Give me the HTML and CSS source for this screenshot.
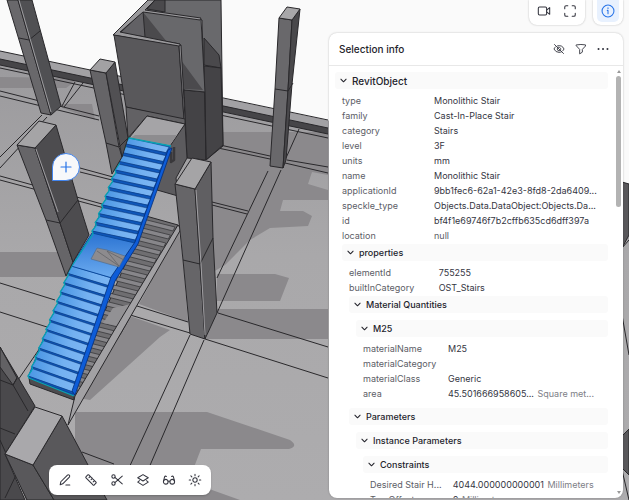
FILE: index.html
```html
<!DOCTYPE html>
<html lang="en">
<head>
<meta charset="utf-8">
<title>Model viewer</title>
<link rel="stylesheet" href="styles.css">
</head>
<body>
<main class="viewer">
  <svg class="scene" viewBox="0 0 629 500" preserveAspectRatio="xMinYMin slice" aria-hidden="true">
    <defs>
      <linearGradient id="floor" x1="0" y1="0" x2="0" y2="1"><stop offset="0" stop-color="#9b9a9d"/><stop offset=".45" stop-color="#a9a8aa"/><stop offset="1" stop-color="#adacae"/></linearGradient>
      <linearGradient id="tread" x1="0" y1="0" x2="1" y2="0"><stop offset="0" stop-color="#4a96e4"/><stop offset=".6" stop-color="#74b1f1"/><stop offset="1" stop-color="#7db6f3"/></linearGradient>
      <linearGradient id="landing" x1="0" y1="0" x2="0" y2="1"><stop offset="0" stop-color="#2b73d2"/><stop offset="1" stop-color="#6cacf0"/></linearGradient>
    </defs>
    <path fill="url(#floor)" d="M0 56 629 188V500H0Z"/>
    <!-- floor shadows -->
    <g fill="#8b898c">
      <path d="M0 77 80 78 66 88H0ZM60 104H92L95 120 62 108ZM222 132H328V175L312 172 308 184 328 190V200H283L280 211H303L312 216 308 226 270 228 250 240 225 265 213 272 206 150Z"/>
      <path d="M217 274H275L289 278 280 301H217ZM216 309H328V339H206ZM0 252H60L70 277H0ZM127 315 170 330 160 337 90 400 78 398ZM178 226 183 260 188 322 139 304 150 284ZM75 412H207L290 440Q299 446 289 449H201L191 475 212 490 240 500H75Z"/>
    </g>
    <!-- parapet -->
    <path fill="#a2a1a4" d="M0 51 629 184V197L0 60Z"/><path fill="#464548" d="M0 59 328 128V134L0 65Z"/>
    <g class="edge">
      <path d="M0 51 328 120M0 59 328 128M0 65 328 134M0 68 328 138"/>
      <path d="M0 91 99 116M0 96 99 120M62 106 75 82M64 107 83 83M42 115 0 157M47 117 0 168M0 176 113 207M0 180 112 210M80 168 113 177M80 172 112 180M0 283 55 300M0 312 47 327M18 380 40 348"/>
      <path d="M268 171 217 278M281 170 217 313M218 313 328 347M205 339 328 378M287 160 328 167M285 163 328 173M212 202 248 211M212 205 247 214M220 145 270 156M218 148 270 159M299 129 286 158M190 335 128 470M204 340 148 470M137 306 188 322M127 314 190 333M82 452 114 464M220 145 206 160"/>
    </g>
    <!-- core walls -->
    <g class="edge">
      <path fill="#69696c" d="M148 0H221L223 146 206 160 202 20 143 11Z"/>
      <path fill="#4a494c" d="M155 0H165V12L147 9ZM204 38 219 55 221 68 204 65Z"/>
      <path fill="#444346" d="M204 66 221 68 223 145 206 160ZM184 90 205 92 206 160 187 158Z"/>
      <path fill="#68686b" d="M143 11 201 19 205 92 184 90 180 44 120 33Z"/>
      <path fill="#4b4a4d" stroke="none" d="M143 12 175 52 203 90 184 89 180 44 145 37Z"/>
      <path fill="#626165" d="M120 33 143 11 145 37Z"/>
      <path fill="#9a999c" d="M113 35 148 0H155L145 10 201 18 200 20 143 12 120 32 180 44 180 47Z"/>
      <path fill="#59585b" d="M114 35 179 46 184 120 126 107Z"/><path fill="#8b8a8d" d="M179 46 181 45 185 119 184 120Z"/>
      <path fill="#626164" d="M126 107 185 119V124L147 116 128 138Z"/>
      <path fill="#5c5b5e" d="M170 145 185 124 187 158 176 178 178 196 157 190Z"/>
      <path fill="#a5a4a7" d="M129 138 147 116 185 124 170 146Z"/><path fill="#8d8c8f" stroke="none" d="M135 135H177L170 145 130 138Z"/>
      <path fill="none" stroke-width="2.5" stroke="#39383b" d="M171 152V162L174 160V147"/>
    </g>
    <!-- lower service stair -->
    <path class="edge" fill="#6f6e71" d="M146 216 178 225 150 281 121 333 77 398 70 392Z"/>
    <g id="rear-steps" stroke="#39383b" stroke-width=".8"></g>
    <path fill="#929194" d="M113 308 131 304 119 326 103 323Z"/>
    <path class="edge" fill="#a2a1a4" d="M178 225 181 229 132 314 68 425 75 396 124 314Z"/>
    <path class="edge" fill="#4d4c4f" d="M29 378 74 394V400L30 384Z"/>
    <!-- selected stair -->
    <path fill="#0f52b4" d="M129 138 171 146 138 244 115 281 74 396 28 376 72 266 92 233Z"/>
    <g id="steps" stroke="#0b3a80" stroke-width=".5"></g>
    <path fill="url(#landing)" stroke="#0b4a9e" d="M92 233 135 243 112 278 71 266Z"/>
    <path fill="#0d5cd8" stroke="#042f78" stroke-width=".8" d="M168 150 172 148 138 244 115 281 75 395 72 391 111 277 135 242Z"/>
    <path fill="#8d8b8e" stroke="#536d8b" stroke-width=".7" d="M97 248 107 250 125 256 119 267 91 259Z"/>
    <path fill="none" stroke="#5f6064" stroke-width=".7" d="M97 251 119 266M107 251 119 266M107 251 124 260"/>
    <path id="outline" fill="none" stroke="#08a3b3" stroke-width="1.3"/>
    <!-- columns -->
    <g class="edge">
      <path fill="#69686b" d="M7 0H18L51 115 41 113Z"/><path fill="#505053" d="M18 0H32L61 106 51 115Z"/><path fill="none" d="M19 38 29 40 40 31"/>
      <path fill="#656467" d="M90 70 106 73 119 147 122 157 112 174 106 143Z"/><path fill="#515053" d="M106 73 115 62 128 138 122 157Z"/><path fill="#a2a1a3" d="M90 70 100 59 115 62 106 73Z"/><path fill="none" d="M106 143 119 147 128 138"/>
      <path fill="#69686b" d="M279 18 292 20 288 90 283 168 270 166 275 89Z"/><path fill="#49484b" d="M292 20 300 9 292 84 286 160 283 168 288 90Z"/><path fill="#a8a7a9" d="M279 18 287 7 300 9 292 20Z"/><path fill="none" d="M275 89 288 91 293 83"/>
      <path fill="#666568" d="M175 184 195 189 200 264 205 339 190 334 183 260Z"/><path fill="#605f62" d="M195 189 211 162 213 238 217 313 205 339 200 264Z"/><path fill="#a5a4a6" d="M175 184 192 158 211 162 195 189Z"/><path fill="none" d="M183 260 200 264 213 238"/>
      <path fill="#666568" d="M17 145 35 148 60 223 73 262 66 276 46 220Z"/><path fill="#4d4c4f" d="M35 148 56 125 78 200 89 235 73 262 60 223Z"/><path fill="#a5a4a6" d="M17 145 39 121 56 125 35 148Z"/><path fill="none" d="M46 220 60 223 78 200"/>
      <path fill="#4a494c" d="M0 347 35 406 5 454 25 500H0Z"/><path fill="#626164" d="M0 347 17 378 13 385 0 367Z"/><path fill="none" d="M0 380 13 385 28 411M17 378 13 385M0 428 15 434M0 440 27 500M18 471 5 498"/>
      <path fill="#59585b" d="M5 454 33 465 54 500H27Z"/><path fill="#59585b" d="M33 465 62 416 88 465 107 500H54Z"/><path fill="#a9a8ab" d="M5 454 35 407 62 416 33 465Z"/>
      <path fill="#59585b" d="M622 182 629 184V235L622 248ZM622 436 629 429V475L622 468Z"/><path fill="none" d="M622 248 629 240M622 315 629 355M622 470 629 500"/>
    </g>
    <g fill="none" stroke="#b4b3b6" stroke-width=".8"><path d="M19 0 51 112M196 190 201 264 205 335M36 149 58 212"/></g>
  </svg>

  <button class="pin" aria-label="Add comment"><svg viewBox="0 0 12 12"><path d="M6 1V11M1 6H11"/></svg></button>

  <div class="overlay">
    <div class="bottom">
      <nav class="toolbar" aria-label="Viewer tools">
        <button aria-label="Markup"><svg viewBox="0 0 16 16"><path d="M2.5 13.5 3.2 10 10.8 2.4Q11.8 1.5 12.9 2.5 13.9 3.6 13 4.6L5.4 12.3ZM9 13.7H13.5"/></svg></button>
        <button aria-label="Measure"><svg viewBox="0 0 16 16"><path d="M2.2 4.3 4.3 2.2Q5 1.7 5.7 2.3L13.7 10.3Q14.3 11 13.7 11.7L11.7 13.7Q11 14.3 10.3 13.7L2.3 5.7Q1.7 5 2.2 4.3ZM7.2 3.8 5.7 5.3M9.6 6.2 8.1 7.7M12 8.6 10.5 10.1"/></svg></button>
        <button aria-label="Section"><svg viewBox="0 0 16 16"><circle cx="4" cy="4" r="1.9"/><circle cx="4" cy="12" r="1.9"/><path d="M5.6 5 14 12.5M5.6 11 14 3.5"/></svg></button>
        <button aria-label="Explode"><svg viewBox="0 0 16 16"><path d="M8 1.8 14 5.5 8 9.2 2 5.5ZM4 8.8 2 10.4 8 14.2 14 10.4 12 8.8"/></svg></button>
        <button aria-label="View modes"><svg viewBox="0 0 16 16"><circle cx="4.3" cy="10" r="2.7"/><circle cx="11.7" cy="10" r="2.7"/><path d="M7 9.5Q8 8.8 9 9.5M1.7 9.5 3 4.2Q3.8 3 5 4M14.3 9.5 13 4.2Q12.2 3 11 4"/></svg></button>
        <button aria-label="Light"><svg viewBox="0 0 16 16"><circle cx="8" cy="8" r="2.5"/><path d="M8 1.4V3M8 13V14.6M1.4 8H3M13 8H14.6M3.3 3.3 4.4 4.4M11.6 11.6 12.7 12.7M3.3 12.7 4.4 11.6M11.6 4.4 12.7 3.3"/></svg></button>
      </nav>
    </div>
    <div class="side">
      <div class="controls">
        <div class="group">
          <button aria-label="Camera"><svg viewBox="0 0 16 16"><rect x="1.5" y="3.5" width="9.5" height="9" rx="1.4"/><path d="M11 7 14.5 4.2V11.8L11 9"/></svg></button>
          <button aria-label="Fit to screen"><svg viewBox="0 0 16 16"><path d="M2 5.5V3.5Q2 2 3.5 2H5.5M10.5 2H12.5Q14 2 14 3.5V5.5M14 10.5V12.5Q14 14 12.5 14H10.5M5.5 14H3.5Q2 14 2 12.5V10.5"/></svg></button>
        </div>
        <div class="group"><button class="active" aria-label="Selection info"><svg viewBox="0 0 16 16"><circle cx="8" cy="8" r="6.8"/><path d="M7.2 7.3H8V11.2M8 4.4V5.2"/></svg></button></div>
      </div>
      <section class="panel">
        <header class="panel-head">
          <h1>Selection info</h1>
          <button aria-label="Hide"><svg viewBox="0 0 16 16"><path d="M2 2 14 14M3.5 5Q2 6.3 1.3 8 3.5 12.5 8 12.5 9.8 12.5 11.3 11.8M6 3.8Q12.2 2.2 14.7 8 14 9.6 12.8 10.6M6.3 6.3A2.4 2.4 0 0 0 9.7 9.7M7.5 5.6A2.4 2.4 0 0 1 10.4 8.5"/></svg></button>
          <button aria-label="Filter"><svg viewBox="0 0 16 16"><path d="M2 2.5Q8 1.4 14 2.5V4L9.8 8.5V12.2L6.2 14.5V8.5L2 4Z"/></svg></button>
          <button aria-label="More"><svg viewBox="0 0 16 16"><path class="dots" d="M2 8H2.1M8 8H8.1M14 8H13.9"/></svg></button>
        </header>
        <div class="panel-body">
          <div class="tree">
            <section>
              <button class="node root"><svg viewBox="0 0 8 8"><path d="M1 2.5 4 5.5 7 2.5"/></svg>RevitObject</button>
              <dl>
                <div><dt>type</dt><dd>Monolithic Stair</dd></div>
                <div><dt>family</dt><dd>Cast-In-Place Stair</dd></div>
                <div><dt>category</dt><dd>Stairs</dd></div>
                <div><dt>level</dt><dd>3F</dd></div>
                <div><dt>units</dt><dd>mm</dd></div>
                <div><dt>name</dt><dd>Monolithic Stair</dd></div>
                <div><dt>applicationId</dt><dd>9bb1fec6-62a1-42e3-8fd8-2da6409...</dd></div>
                <div><dt>speckle_type</dt><dd>Objects.Data.DataObject:Objects.Da...</dd></div>
                <div><dt>id</dt><dd>bf4f1e69746f7b2cffb635cd6dff397a</dd></div>
                <div><dt>location</dt><dd class="null">null</dd></div>
              </dl>
              <section>
                <button class="node"><svg viewBox="0 0 8 8"><path d="M1 2.5 4 5.5 7 2.5"/></svg>properties</button>
                <dl>
                  <div><dt>elementId</dt><dd>755255</dd></div>
                  <div><dt>builtInCategory</dt><dd>OST_Stairs</dd></div>
                </dl>
                <section>
                  <button class="node"><svg viewBox="0 0 8 8"><path d="M1 2.5 4 5.5 7 2.5"/></svg>Material Quantities</button>
                  <section>
                    <button class="node"><svg viewBox="0 0 8 8"><path d="M1 2.5 4 5.5 7 2.5"/></svg>M25</button>
                    <dl>
                      <div><dt>materialName</dt><dd>M25</dd></div>
                      <div><dt>materialCategory</dt><dd></dd></div>
                      <div><dt>materialClass</dt><dd>Generic</dd></div>
                      <div><dt>area</dt><dd>45.501666958605... <span class="unit">Square met...</span></dd></div>
                    </dl>
                  </section>
                </section>
                <section>
                  <button class="node"><svg viewBox="0 0 8 8"><path d="M1 2.5 4 5.5 7 2.5"/></svg>Parameters</button>
                  <section>
                    <button class="node"><svg viewBox="0 0 8 8"><path d="M1 2.5 4 5.5 7 2.5"/></svg>Instance Parameters</button>
                    <section>
                      <button class="node"><svg viewBox="0 0 8 8"><path d="M1 2.5 4 5.5 7 2.5"/></svg>Constraints</button>
                      <dl>
                        <div><dt>Desired Stair H...</dt><dd>4044.000000000001 <span class="unit">Millimeters</span></dd></div>
                        <div><dt>Top Offset</dt><dd>0 <span class="unit">Millimeters</span></dd></div>
                      </dl>
                    </section>
                  </section>
                </section>
              </section>
            </section>
          </div>
          <div class="scrollbar" aria-hidden="true"><i class="up"></i><i class="thumb"></i><i class="down"></i></div>
        </div>
      </section>
    </div>
  </div>
</main>
<script src="script.js"></script>
</body>
</html>
```
FILE: styles.css
```css
* { box-sizing: border-box; }
body { margin: 0; font-family: Inter, "Liberation Sans", sans-serif; font-size: 9px; color: #34353f; }
button { border: 0; margin: 0; padding: 0; background: none; font: inherit; color: inherit; display: flex; align-items: center; justify-content: center; }
button svg { fill: none; stroke: currentColor; stroke-width: 1.2; stroke-linecap: round; stroke-linejoin: round; }

.viewer { position: relative; height: 100vh; overflow: hidden; background: #fafafa; }
.scene { position: absolute; inset: 0; width: 100%; height: 100%; }
.edge { stroke: #29282b; stroke-width: 1; stroke-linejoin: round; }
.edge > path:not([fill]) { fill: none; }

.pin { position: absolute; left: 52px; top: 153px; width: 28px; height: 28px; border: 1px solid #4285ef; border-radius: 14px 14px 14px 0; background: #f7f8fa; color: #2673e8; }
.pin svg { width: 12px; height: 12px; }

.overlay { position: relative; height: 100%; display: flex; justify-content: space-between; }
.bottom { display: flex; align-items: flex-end; padding: 0 0 5px 49px; }
.toolbar { display: flex; gap: 4px; padding: 4px 5px; border-radius: 8px; background: #fff; box-shadow: 0 1px 2px #0003; }
.toolbar button { width: 22px; height: 22px; }
.toolbar svg { width: 14px; height: 14px; }

.side { width: 300px; display: flex; flex-direction: column; gap: 8px; padding: 0 6px 2px 0; }
.controls { display: flex; justify-content: flex-end; gap: 8px; }
.group { display: flex; gap: 4px; padding: 0 4px 3px; border-radius: 0 0 8px 8px; background: #fff; box-shadow: 0 0 2px #0004; }
.group button { width: 22px; height: 22px; border-radius: 0 0 5px 5px; }
.group svg { width: 14px; height: 14px; }
.group .active { background: #e8f1fe; color: #2673e8; }

.panel { flex: 1; min-height: 0; display: flex; flex-direction: column; overflow: hidden; border-radius: 8px; background: #fff; box-shadow: 0 0 2px #0004; }
.panel-head { display: flex; align-items: center; gap: 8px; height: 33px; padding: 0 13px 0 10px; border-bottom: 1px solid #e8e8e8; }
.panel-head h1 { flex: 1; margin: 0; font-size: 10px; font-weight: 500; color: #24242c; }
.panel-head button { width: 14px; height: 14px; }
.panel-head svg { width: 12px; height: 12px; }
.panel-head .dots { stroke-width: 2.6; }
.panel-body { flex: 1; min-height: 0; display: flex; }
.tree { flex: 1; min-width: 0; padding: 6px 6px 0 6px; overflow: hidden; }
.tree section section { margin-left: 7px; }
.node { width: 100%; height: 17px; justify-content: flex-start; gap: 5px; padding-left: 5px; border-radius: 3px; background: #fafafa; color: #24242c; font-weight: 500; }
.node.root { font-size: 10px; }
.node svg { width: 7px; height: 7px; }
.node + section, section + section { margin-top: 7px; }
dl + section { margin-top: 1px; }
dl { margin: 4px 0 0; padding-left: 7px; }
dl div { display: grid; grid-template-columns: minmax(0, 1fr) minmax(0, 2fr); gap: 5px; line-height: 15px; height: 15px; }
dt, dd { margin: 0; white-space: nowrap; }
dt { color: #5c5d66; }
.null { color: #5c5d66; }
.unit { margin-left: 1px; color: #7d7e86; }
.scrollbar { width: 9px; display: flex; flex-direction: column; align-items: center; padding: 4px 0; }
.up, .down { border: 2px solid transparent; }
.up { border-bottom: 3px solid #999; border-top: 0; }
.down { margin-top: auto; border-top: 3px solid #999; border-bottom: 0; }
.thumb { width: 5px; height: 31%; margin-top: 3px; border-radius: 3px; background: #b3b3b3; }
```
FILE: script.js
```js
const NS = "http://www.w3.org/2000/svg";

function polygon(parent, points, fill) {
  const el = document.createElementNS(NS, "path");
  el.setAttribute("d", "M" + points.map(p => p.join(" ")).join("L") + "Z");
  el.setAttribute("fill", fill);
  parent.append(el);
}

const mix = (a, b, t) => [a[0] + (b[0] - a[0]) * t, a[1] + (b[1] - a[1]) * t];
const steps = document.getElementById("steps");
const zigzag = [];

// Draws one flight: a light tread and a dark riser for every step.
function flight(leftTop, rightTop, leftEnd, rightEnd, count, riser) {
  for (let i = 0; i < count; i++) {
    const l = mix(leftTop, leftEnd, i / count);
    const r = mix(rightTop, rightEnd, i / count);
    const l2 = mix(leftTop, leftEnd, (i + 1) / count);
    const r2 = mix(rightTop, rightEnd, (i + 1) / count);
    const nose = [l2[0] - 1, l2[1] - riser];
    polygon(steps, [l, r, [r2[0], r2[1] - riser], nose], "url(#tread)");
    polygon(steps, [nose, [r2[0], r2[1] - riser], r2, l2], "#0f56b8");
    zigzag.push(l, nose, l2);
  }
}

flight([129, 138], [169, 147], [93, 234], [135, 243], 11, 3);
flight([72, 266], [112, 278], [29, 378], [73, 394], 12, 2);

document.getElementById("outline").setAttribute("d",
  "M171 146L" + zigzag.map(p => p.join(" ")).join("L") + "L74 396");

const rear = document.getElementById("rear-steps");
for (let i = 0; i < 22; i++) {
  const r = mix([175, 227], [78, 395], i / 21);
  const w = 32 - i;
  polygon(rear, [r, [r[0] - w, r[1] - w / 4], [r[0] - w - 2, r[1] - w / 4 + 4], [r[0] - 2, r[1] + 4]], "#87868a");
}
```
